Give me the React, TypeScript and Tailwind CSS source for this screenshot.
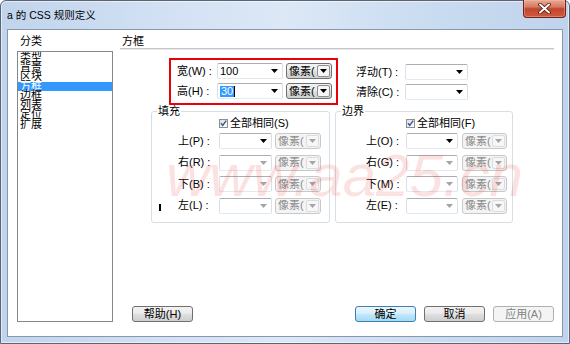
import React from "react";

function Arrow({ gray = false }: { gray?: boolean }) {
  return (
    <svg width="7" height="4" viewBox="0 0 7 4" className="shrink-0">
      <path d="M0 0H7L3.5 4Z" fill={gray ? "#a5a5a5" : "#000000"} />
    </svg>
  );
}

function Combo({ w, gray = false, children }: { w: string; gray?: boolean; children?: React.ReactNode }) {
  return (
    <div className={`${w} h-[16px] shrink-0 flex items-center justify-between rounded-[2px] border border-t-[#abadb3] border-l-[#dbdfe6] border-r-[#dbdfe6] border-b-[#e3e9ef] bg-white pl-[2px] pr-[4px]`}>
      <div className="flex items-center leading-none">{children}</div>
      <Arrow gray={gray} />
    </div>
  );
}

function Unit({ w, disabled = false }: { w: string; disabled?: boolean }) {
  return (
    <div
      className={`${w} h-[16px] shrink-0 flex items-center rounded-[3px] border pl-[2px] pr-[1px] ${
        disabled
          ? "border-[#c5c9cc] bg-[#f4f4f4] text-[#8a8a8a]"
          : "border-[#707070] bg-[linear-gradient(#f2f2f2,#ebebeb_45%,#dddddd_55%,#cfcfcf)] text-black"
      }`}
    >
      <span className="flex-1 leading-none whitespace-nowrap overflow-hidden">像素(</span>
      <span
        className={`w-[13px] h-[12px] shrink-0 flex items-center justify-center rounded-[2px] border ${
          disabled ? "border-[#dcdcdc] bg-[#f7f7f7]" : "border-[#8f8f8f] bg-[#f6f6f6]"
        }`}
      >
        <Arrow gray={disabled} />
      </span>
    </div>
  );
}

function Row({ label, lw, children }: { label: string; lw: string; children: React.ReactNode }) {
  return (
    <div className="flex items-center h-[16px]">
      <span className={`${lw} shrink-0 whitespace-nowrap leading-none`}>{label}</span>
      {children}
    </div>
  );
}

function Check() {
  return (
    <svg width="9" height="9" viewBox="0 0 9 9" className="shrink-0">
      <defs>
        <linearGradient id="cb" x1="0" y1="0" x2="1" y2="1">
          <stop offset="0" stopColor="#dcdcdc" />
          <stop offset="1" stopColor="#ffffff" />
        </linearGradient>
      </defs>
      <rect x="0.5" y="0.5" width="8" height="8" fill="url(#cb)" stroke="#8e8f8f" />
      <path d="M2 4.3L3.7 6.3L7.2 1.6" fill="none" stroke="#3556a0" strokeWidth="1.4" />
    </svg>
  );
}

function Btn({ label, kind = "normal", w = "w-[61px]" }: { label: string; kind?: "normal" | "default" | "disabled"; w?: string }) {
  const cls =
    kind === "default"
      ? "border-[#3c7fb1] bg-[linear-gradient(#eaf6fd,#d9f0fc_45%,#bee6fd_55%,#a7d9f5)] text-black"
      : kind === "disabled"
      ? "border-[#adb2b5] bg-[#f4f4f4] text-[#838383]"
      : "border-[#707070] bg-[linear-gradient(#f2f2f2,#ebebeb_45%,#dddddd_55%,#cfcfcf)] text-black";
  return (
    <div className={`${w} h-[16px] shrink-0 flex items-center justify-center rounded-[3px] border leading-none ${cls}`}>
      {label}
    </div>
  );
}

const cats = ["类型", "背景", "区块", "方框", "边框", "列表", "定位", "扩展"];

export default function App() {
  return (
    <div className="w-[570px] h-[344px] relative overflow-hidden font-['Liberation_Sans','Noto_Sans_CJK_SC',sans-serif] text-[11px] text-black bg-white">
      {/* window */}
      <div className="w-[570px] h-[344px] flex flex-col rounded-t-[6px] border border-[#5a6472] bg-[linear-gradient(90deg,#c0d4ed,#d3e1f3_30%,#dce8f6_50%,#cadcf0_75%,#bfd3ec)] px-[6px] pb-[6px] shadow-[inset_0_0_0_1px_rgba(255,255,255,0.55)]">
        {/* title bar */}
        <div className="h-[28px] shrink-0 flex items-start justify-between -mx-[6px]">
          <div className="pl-[6px] pt-[7px] text-[10.5px] leading-[14px] whitespace-nowrap">a 的 CSS 规则定义</div>
          <div className="-mt-[1px] mr-[3px] w-[43px] h-[18px] flex items-center justify-center rounded-b-[4px] border border-t-0 border-[#6d2417] bg-[linear-gradient(#e9a994,#d67a62_40%,#c2452d_52%,#cf5a3e)] shadow-[inset_0_0_0_1px_rgba(255,200,190,0.35)]">
            <svg width="13" height="11" viewBox="0 0 13 11">
              <path d="M2 1.5L11 9.5M11 1.5L2 9.5" stroke="#4a1208" strokeWidth="3.6" strokeLinecap="round" />
              <path d="M2 1.5L11 9.5M11 1.5L2 9.5" stroke="#ffffff" strokeWidth="2" strokeLinecap="round" />
            </svg>
          </div>
        </div>

        {/* client */}
        <div className="flex-1 flex border border-[#8797ad] bg-white">
          {/* left column */}
          <div className="w-[112px] shrink-0 pl-[9px] flex flex-col">
            <div className="pt-[5px] pl-[3px] h-[18px] leading-[13px]">分类</div>
            <div className="mt-[3px] w-[96px] h-[271px] border border-[#828790] bg-white pt-[1px] overflow-hidden">
              {cats.map((c, i) => (
                <div
                  key={c}
                  className={`h-[9.5px] leading-[9.5px] pl-[2px] whitespace-nowrap ${i === 3 ? "bg-[#3399ff] text-white" : ""}`}
                >
                  {c}
                </div>
              ))}
            </div>
          </div>

          {/* right column */}
          <div className="flex-1 flex flex-col pr-[8px]">
            <div className="pt-[5px] h-[18px] pl-[2px] leading-[13px]">方框</div>
            <div className="h-[1px] bg-[#c6c6c6]" />
            <div className="h-[1px] bg-[#e8e8e8]" />

            {/* top fields */}
            <div className="mt-[8px] flex items-start">
              <div className="ml-[49px] w-[169px] h-[47px] border-2 border-[#e8000b] pl-[6px] pt-[3px] flex flex-col gap-[4px]">
                <Row label="宽(W) :" lw="w-[40px]">
                  <Combo w="w-[66px]">
                    <span>100</span>
                  </Combo>
                  <div className="w-[3px]" />
                  <Unit w="w-[46px]" />
                </Row>
                <Row label="高(H) :" lw="w-[40px]">
                  <Combo w="w-[66px]">
                    <span className="bg-[#3399ff] text-white px-[1px] leading-[11px]">30</span>
                    <span className="w-[1px] h-[11px] bg-black" />
                  </Combo>
                  <div className="w-[3px]" />
                  <Unit w="w-[46px]" />
                </Row>
              </div>
              <div className="ml-[18px] pt-[6px] flex flex-col gap-[4px]">
                <Row label="浮动(T) :" lw="w-[49px]">
                  <Combo w="w-[63px]" />
                </Row>
                <Row label="清除(C) :" lw="w-[49px]">
                  <Combo w="w-[63px]" />
                </Row>
              </div>
            </div>

            {/* fieldsets */}
            <div className="mt-[6px] ml-[31px] flex gap-[5px]">
              <div className="relative w-[179px] h-[112px] rounded-[3px] border border-[#d5dfe5] pt-[6px] pl-[26px]">
                <span className="absolute -top-[7px] left-[5px] bg-white px-[1px] leading-[12px]">填充</span>
                <span className="absolute left-[7px] top-[92px] w-[2px] h-[7px] bg-black" />
                <div className="pl-[41px] h-[10px] flex items-center gap-[2px]">
                  <Check />
                  <span className="leading-none whitespace-nowrap">全部相同(S)</span>
                </div>
                <div className="mt-[5px] flex flex-col gap-[5.5px]">
                  {[
                    ["上(P) :", false],
                    ["右(R) :", true],
                    ["下(B) :", true],
                    ["左(L) :", true],
                  ].map(([l, g]) => (
                    <Row key={l as string} label={l as string} lw="w-[41px]">
                      <Combo w="w-[53px]" gray={g as boolean} />
                      <div className="w-[3px]" />
                      <Unit w="w-[46px]" disabled />
                    </Row>
                  ))}
                </div>
              </div>
              <div className="relative w-[178px] h-[112px] rounded-[3px] border border-[#d5dfe5] pt-[6px] pl-[30px]">
                <span className="absolute -top-[7px] left-[5px] bg-white px-[1px] leading-[12px]">边界</span>
                <div className="pl-[40px] h-[10px] flex items-center gap-[2px]">
                  <Check />
                  <span className="leading-none whitespace-nowrap">全部相同(F)</span>
                </div>
                <div className="mt-[5px] flex flex-col gap-[5.5px]">
                  {[
                    ["上(O) :", false],
                    ["右(G) :", true],
                    ["下(M) :", true],
                    ["左(E) :", true],
                  ].map(([l, g]) => (
                    <Row key={l as string} label={l as string} lw="w-[40px]">
                      <Combo w="w-[52px]" gray={g as boolean} />
                      <div className="w-[4px]" />
                      <Unit w="w-[45px]" disabled />
                    </Row>
                  ))}
                </div>
              </div>
            </div>

            {/* buttons */}
            <div className="mt-auto pb-[14px] pl-[12px] flex items-center">
              <Btn label="帮助(H)" />
              <div className="flex-1" />
              <div className="flex gap-[8px]">
                <Btn label="确定" kind="default" />
                <Btn label="取消" />
                <Btn label="应用(A)" kind="disabled" />
              </div>
            </div>
          </div>
        </div>
      </div>

      {/* watermark */}
      <div className="absolute left-[166px] top-[146px] pointer-events-none whitespace-nowrap text-[60px] leading-none italic font-['Liberation_Sans',sans-serif] text-[rgba(240,80,80,0.17)]">
        www.aa25.cn
      </div>
    </div>
  );
}
